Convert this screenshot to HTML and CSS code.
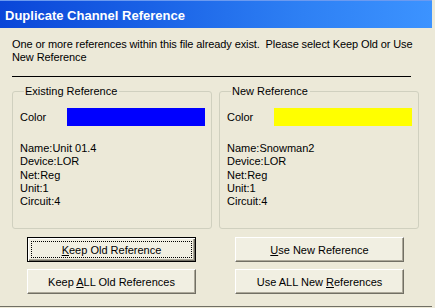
FILE: index.html
```html
<!DOCTYPE html>
<html>
<head>
<meta charset="utf-8">
<link rel="stylesheet" href="styles.css">
</head>
<body>
<div class="window">
  <div class="titlebar"><span class="title">Duplicate Channel Reference</span></div>
  <div class="content">
    <p class="msg">One or more references within this file already exist.&nbsp; Please select Keep Old or Use New Reference</p>
    <div class="sep"></div>
    <div class="groups">
      <fieldset class="group">
        <legend class="legend">Existing Reference</legend>
        <div class="color-row"><span class="color-label">Color</span><span class="swatch swatch-blue"></span></div>
        <div class="info">
          <div>Name:Unit 01.4</div>
          <div>Device:LOR</div>
          <div>Net:Reg</div>
          <div>Unit:1</div>
          <div>Circuit:4</div>
        </div>
      </fieldset>
      <fieldset class="group">
        <legend class="legend">New Reference</legend>
        <div class="color-row"><span class="color-label">Color</span><span class="swatch swatch-yellow"></span></div>
        <div class="info">
          <div>Name:Snowman2</div>
          <div>Device:LOR</div>
          <div>Net:Reg</div>
          <div>Unit:1</div>
          <div>Circuit:4</div>
        </div>
      </fieldset>
    </div>
    <div class="buttons">
      <button class="btn btn-default"><u>K</u>eep Old Reference</button>
      <button class="btn"><u>U</u>se New Reference</button>
      <button class="btn">Keep <u>A</u>LL Old References</button>
      <button class="btn">Use ALL New <u>R</u>eferences</button>
    </div>
  </div>
</div>
</body>
</html>
```

FILE: styles.css
```css
html, body {
  margin: 0;
  padding: 0;
  background: #ECE9D8;
}
body {
  width: 435px;
  height: 308px;
  overflow: hidden;
  font-family: "Liberation Sans", Arial, sans-serif;
  font-size: 11px;
  color: #000;
}
.window {
  width: 432px;
  height: 307px;
  border-bottom: 1px solid #716F64;
  background: #ECE9D8;
  box-sizing: border-box;
}
.titlebar {
  height: 28px;
  background: linear-gradient(to right, #0A46D8 0%, #1A62E6 35%, #2E80F4 70%, #3C93FF 100%);
  border-top: 1px solid #6B9AF0;
  box-sizing: border-box;
  display: flex;
  align-items: center;
  padding-left: 5px;
}
.title {
  color: #fff;
  font-weight: bold;
  font-size: 13px;
  margin-top: 1px;
}
.content {
  padding: 0 0 0 12px;
}
.msg {
  margin: 10px 0 0 0;
  width: 410px;
  line-height: 13px;
  letter-spacing: -0.1px;
}
.sep {
  width: 399px;
  height: 1px;
  background: #000;
  margin-top: 12px;
}
.groups {
  display: flex;
  gap: 7px;
  margin-top: 8px;
}
.group {
  width: 200px;
  height: 144px;
  box-sizing: border-box;
  margin: 0;
  padding: 0 6px 0 7px;
  border: 1px solid #D0D0BF;
  border-radius: 3px;
  min-width: 0;
}
.legend {
  padding: 0 2px 0 1px;
  margin-left: 4px;
  line-height: 13px;
}
.color-row {
  display: flex;
  align-items: center;
  justify-content: space-between;
  margin-top: 10px;
}
.swatch {
  display: block;
  width: 138px;
  height: 18px;
}
.swatch-blue { background: #0000FF; }
.swatch-yellow { background: #FFFF00; }
.info {
  margin-top: 16px;
  line-height: 13.25px;
}
.buttons {
  display: grid;
  grid-template-columns: 169px 169px;
  column-gap: 39px;
  row-gap: 7px;
  margin-top: 8px;
  margin-left: 15px;
}
.btn {
  position: relative;
  height: 25px;
  padding: 0;
  font-family: "Liberation Sans", Arial, sans-serif;
  font-size: 11px;
  color: #000;
  background: #F1EFE2;
  border: 1px solid;
  border-color: #FFFFFF #716F64 #716F64 #FFFFFF;
  box-shadow: inset -1px -1px #ACA899;
  border-radius: 0;
}
.btn u { text-decoration: underline; text-underline-offset: 1px; }
.btn-default {
  border-color: #000;
  box-shadow: inset 1px 1px #FFFFFF, inset -1px -1px #716F64, inset -2px -2px #ACA899;
}
.btn-default::after {
  content: "";
  position: absolute;
  left: 3px;
  top: 3px;
  right: 3px;
  bottom: 3px;
  border: 1px dotted #000;
}
```
